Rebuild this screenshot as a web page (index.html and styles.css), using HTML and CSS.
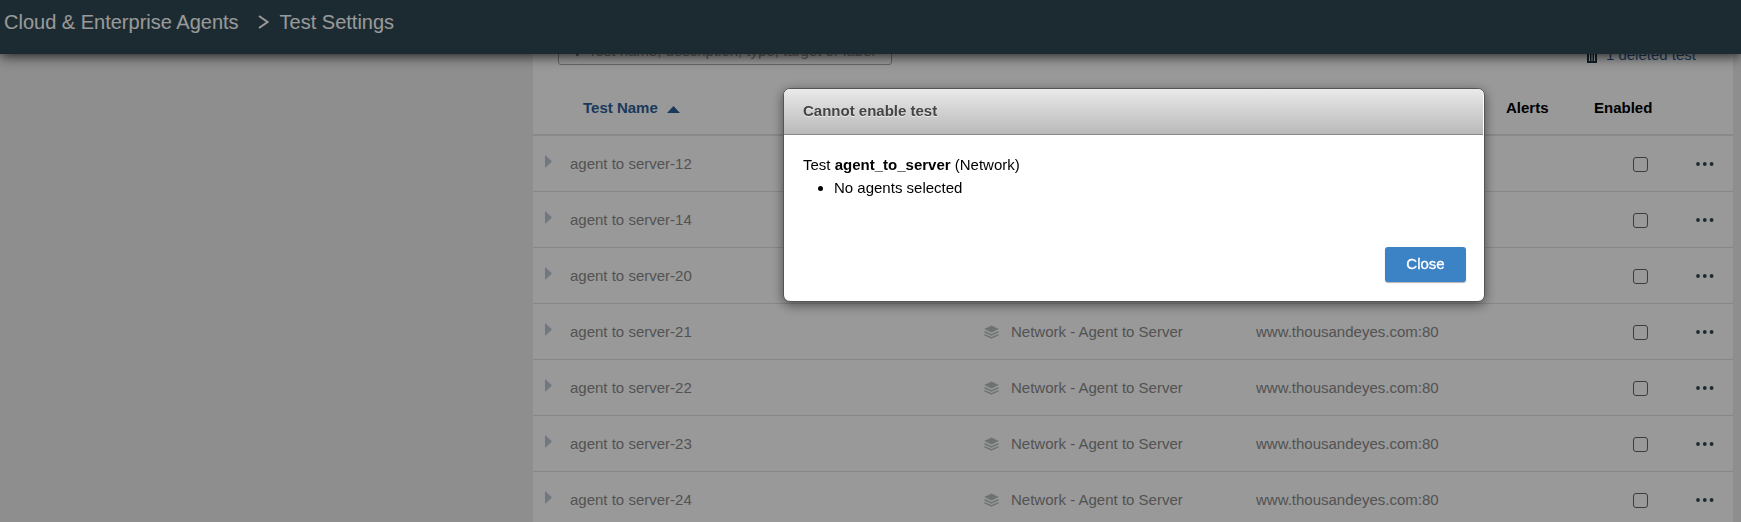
FILE: index.html
```html
<!DOCTYPE html>
<html lang="en">
<head>
<meta charset="utf-8">
<title>Test Settings</title>
<link rel="stylesheet" href="styles.css">
</head>
<body>
<svg class="sprite" width="0" height="0" aria-hidden="true">
  <symbol id="layers" viewBox="0 0 15 14">
    <path d="M7.5 0.5 14.8 4 7.5 7.5 0.2 4Z"/>
    <path d="M0.4 6.6 7.5 10 14.6 6.6M0.4 9.6 7.5 13 14.6 9.6" fill="none" stroke="currentColor" stroke-width="1.4"/>
  </symbol>
  <symbol id="dots" viewBox="0 0 18 4">
    <circle cx="2" cy="2" r="1.9"/><circle cx="8.8" cy="2" r="1.9"/><circle cx="15.6" cy="2" r="1.9"/>
  </symbol>
  <symbol id="expand" viewBox="0 0 7 13"><path d="M0 0 7 6.5 0 13Z"/></symbol>
</svg>

<header class="topbar">
  <nav class="crumbs" aria-label="Breadcrumb">
    <span>Cloud &amp; Enterprise Agents</span>
    <svg class="crumb-sep" width="11" height="14" viewBox="0 0 11 14" aria-hidden="true"><path d="M1 1 9.5 7 1 13" fill="none" stroke="currentColor" stroke-width="2"/></svg>
    <span>Test Settings</span>
  </nav>
</header>

<div class="page">
  <main class="panel">
    <div class="tools">
      <div class="search">
        <svg class="search-icon" width="14" height="14" viewBox="0 0 14 14" aria-hidden="true"><circle cx="6" cy="5.5" r="4" fill="none" stroke="currentColor" stroke-width="2"/><path d="M3 8 6 12" stroke="currentColor" stroke-width="2"/></svg>
        <input class="search-input" type="text" aria-label="Search tests" placeholder="Test name, description, type, target or label">
      </div>
      <a class="deleted" href="#">
        <svg width="12" height="16" viewBox="0 0 12 16" aria-hidden="true"><path d="M0 2H12V4H0ZM4 0H8V2H4Z" fill="#1e3a48"/><path d="M1 5H11V16H1ZM3 6V14H4V6ZM5.5 6V14H6.5V6ZM8 6V14H9V6Z" fill="#1e3a48" fill-rule="evenodd"/></svg>
        <span>1 deleted test</span>
      </a>
    </div>
    <table class="tests">
      <colgroup><col class="c-toggle"><col class="c-name"><col class="c-type"><col class="c-target"><col class="c-alerts"><col class="c-enabled"><col class="c-menu"></colgroup>
      <thead>
        <tr>
          <th></th>
          <th class="sorted">Test Name <svg width="13" height="7" viewBox="0 0 13 7" aria-hidden="true"><path d="M0 7 6.5 0 13 7Z" fill="currentColor"/></svg></th>
          <th></th><th></th>
          <th>Alerts</th><th>Enabled</th><th></th>
        </tr>
      </thead>
      <tbody>
        <tr><td><svg class="expand" aria-hidden="true"><use href="#expand"/></svg></td><td>agent to server-12</td><td></td><td></td><td></td><td class="on"><input type="checkbox" aria-label="Enable agent to server-12"></td><td><button class="more" aria-label="More actions"><svg width="18" height="4"><use href="#dots"/></svg></button></td></tr>
        <tr><td><svg class="expand" aria-hidden="true"><use href="#expand"/></svg></td><td>agent to server-14</td><td></td><td></td><td></td><td class="on"><input type="checkbox" aria-label="Enable agent to server-14"></td><td><button class="more" aria-label="More actions"><svg width="18" height="4"><use href="#dots"/></svg></button></td></tr>
        <tr><td><svg class="expand" aria-hidden="true"><use href="#expand"/></svg></td><td>agent to server-20</td><td></td><td></td><td></td><td class="on"><input type="checkbox" aria-label="Enable agent to server-20"></td><td><button class="more" aria-label="More actions"><svg width="18" height="4"><use href="#dots"/></svg></button></td></tr>
        <tr><td><svg class="expand" aria-hidden="true"><use href="#expand"/></svg></td><td>agent to server-21</td><td><span class="type"><svg class="layers" aria-hidden="true"><use href="#layers"/></svg>Network - Agent to Server</span></td><td>www.thousandeyes.com:80</td><td></td><td class="on"><input type="checkbox" aria-label="Enable agent to server-21"></td><td><button class="more" aria-label="More actions"><svg width="18" height="4"><use href="#dots"/></svg></button></td></tr>
        <tr><td><svg class="expand" aria-hidden="true"><use href="#expand"/></svg></td><td>agent to server-22</td><td><span class="type"><svg class="layers" aria-hidden="true"><use href="#layers"/></svg>Network - Agent to Server</span></td><td>www.thousandeyes.com:80</td><td></td><td class="on"><input type="checkbox" aria-label="Enable agent to server-22"></td><td><button class="more" aria-label="More actions"><svg width="18" height="4"><use href="#dots"/></svg></button></td></tr>
        <tr><td><svg class="expand" aria-hidden="true"><use href="#expand"/></svg></td><td>agent to server-23</td><td><span class="type"><svg class="layers" aria-hidden="true"><use href="#layers"/></svg>Network - Agent to Server</span></td><td>www.thousandeyes.com:80</td><td></td><td class="on"><input type="checkbox" aria-label="Enable agent to server-23"></td><td><button class="more" aria-label="More actions"><svg width="18" height="4"><use href="#dots"/></svg></button></td></tr>
        <tr><td><svg class="expand" aria-hidden="true"><use href="#expand"/></svg></td><td>agent to server-24</td><td><span class="type"><svg class="layers" aria-hidden="true"><use href="#layers"/></svg>Network - Agent to Server</span></td><td>www.thousandeyes.com:80</td><td></td><td class="on"><input type="checkbox" aria-label="Enable agent to server-24"></td><td><button class="more" aria-label="More actions"><svg width="18" height="4"><use href="#dots"/></svg></button></td></tr>
      </tbody>
    </table>
  </main>
</div>

<div class="overlay">
  <section class="dialog" role="dialog" aria-modal="true" aria-labelledby="dialog-title">
    <h2 class="dialog-title" id="dialog-title">Cannot enable test</h2>
    <div class="dialog-body">
      <p>Test <b>agent_to_server</b> (Network)</p>
      <ul><li>No agents selected</li></ul>
    </div>
    <div class="dialog-actions"><button class="close" type="button">Close</button></div>
  </section>
</div>
</body>
</html>
```

FILE: styles.css
```css
* { box-sizing: border-box; }

html { height: 100%; }

body {
  margin: 0;
  height: 100%;
  overflow: hidden;
  background: #ededed;
  color: #000;
  font: 15px/22px "Liberation Sans", Arial, sans-serif;
}

.sprite { position: absolute; }

/* Top bar */
.topbar {
  position: relative;
  z-index: 1;
  height: 54px;
  padding-top: 10px;
  background: #2f4954;
  color: #fff;
  box-shadow: 0 2px 12px rgba(0, 0, 0, 0.8);
}

.crumbs {
  display: flex;
  align-items: center;
  padding-left: 4px;
  font-size: 20px;
  line-height: 24px;
}

.crumb-sep { margin: 0 11px 0 19px; }

/* Page: the list is scrolled a little under the top bar */
.page {
  display: grid;
  grid-template-columns: 1fr;
  margin-top: -18px;
  padding: 0 8px 0 533px;
}

.panel { background: #fff; }

.tools {
  display: flex;
  justify-content: space-between;
  align-items: flex-start;
  height: 46px;
  padding: 0 37px 0 25px;
}

.search {
  display: flex;
  align-items: center;
  width: 334px;
  height: 29px;
  padding-left: 13px;
  gap: 2px;
  border: 1px solid #aaa;
  border-radius: 3px;
  color: #777;
}

.search-icon { flex: none; }

.search-input {
  flex: 1;
  min-width: 0;
  padding: 0;
  border: 0;
  outline: 0;
  background: none;
  font: inherit;
}

.search-input::placeholder { color: #999; opacity: 1; }

.deleted {
  display: flex;
  align-items: center;
  gap: 8px;
  height: 38px;
  color: #2d5f9a;
  text-decoration: none;
}

/* Tests table */
.tests {
  width: 100%;
  table-layout: fixed;
  border-collapse: separate;
  border-spacing: 0;
}

.c-toggle { width: 37px; }
.c-type { width: 272px; }
.c-target { width: 250px; }
.c-alerts { width: 88px; }
.c-enabled { width: 85px; }
.c-menu { width: 54px; }

.tests th {
  height: 54px;
  padding: 0;
  border-bottom: 2px solid #e4e4e4;
  text-align: left;
}

.tests .sorted { padding-left: 13px; color: #2d5f9a; }
.sorted svg { margin-left: 5px; }

.tests td {
  height: 56px;
  padding: 0;
  border-bottom: 1px solid #e2e2e2;
  color: #8a8a8a;
}

.expand {
  display: block;
  width: 7px;
  height: 13px;
  margin: 0 0 4px 12px;
  fill: #bcc9d8;
}

.type {
  display: flex;
  align-items: center;
  gap: 12px;
}

.layers {
  width: 15px;
  height: 14px;
  color: #b8bfc2;
  fill: currentColor;
}

.on input {
  display: block;
  appearance: none;
  width: 15px;
  height: 15px;
  margin: 2px 0 0 39px;
  border: 1px solid #666;
  border-radius: 3px;
}

.more {
  display: block;
  margin-left: 17px;
  padding: 0;
  border: 0;
  background: none;
  fill: #2f4954;
}

.more svg { display: block; }

/* Dialog */
.overlay {
  position: fixed;
  inset: 0;
  z-index: 2;
  display: flex;
  justify-content: center;
  align-items: flex-start;
  padding: 88px 6px 0 533px;
  background: rgba(0, 0, 0, 0.4);
}

.dialog {
  width: 702px;
  border: 1px solid #555;
  border-radius: 7px;
  background: #fff;
  box-shadow: 0 3px 12px rgba(0, 0, 0, 0.5);
}

.dialog-title {
  margin: 0 1px 0 0;
  padding: 11px 19px 12px;
  border-bottom: 1px solid #888;
  border-radius: 6px 6px 0 0;
  background: linear-gradient(#eaeaea, #b9b9b9);
  color: #444;
  font-size: 15px;
  line-height: 22px;
  text-shadow: 0 1px 0 rgba(255, 255, 255, 0.6);
}

.dialog-body { padding: 18px 19px 0; }
.dialog-body p { margin: 0; line-height: 23px; }
.dialog-body ul { margin: 0; padding-left: 31px; line-height: 23px; }

.dialog-actions {
  display: flex;
  justify-content: flex-end;
  padding: 48px 18px 19px;
}

.close {
  width: 81px;
  height: 35px;
  padding: 0 0 2px;
  border: 0;
  border-radius: 3px;
  background: #3c83c6;
  box-shadow: 0 1px 1px rgba(0, 0, 0, 0.3);
  color: #fff;
  font: 15px/22px "Liberation Sans", Arial, sans-serif;
  -webkit-text-stroke: 0.3px #fff;
}
```
